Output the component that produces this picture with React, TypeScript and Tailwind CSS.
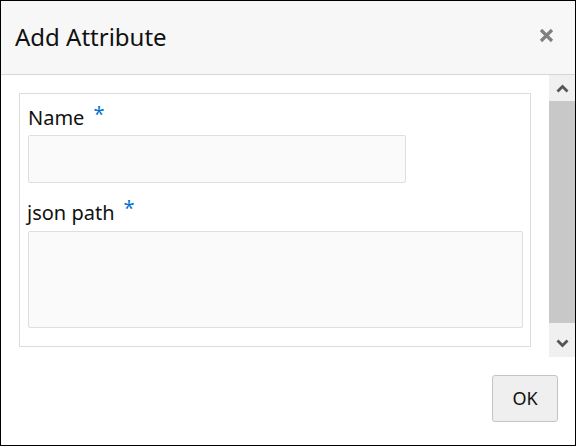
import React from "react";

export default function App() {
  return (
    <div
      className="w-[576px] h-[446px] border border-black bg-white flex flex-col overflow-hidden"
      style={{ fontFamily: '"Noto Sans", "Open Sans", sans-serif' }}
    >
      <div className="h-[74px] shrink-0 bg-[#f7f7f7] border-b border-[#d6d6d6] flex items-center justify-between pl-[14px] pr-[21px]">
        <h1 className="text-[24px] text-[#111] leading-none -mt-[2px]">Add Attribute</h1>
        <svg width="15" height="15" viewBox="0 0 15 15" aria-label="close" className="-mt-[5px]">
          <path d="M2 2 L13 13 M13 2 L2 13" stroke="#808080" strokeWidth="3.2" strokeLinecap="butt" />
        </svg>
      </div>

      <div className="h-[282px] shrink-0 flex">
        <div className="flex-1 pl-[18px] pr-[18px] pt-[18px]">
          <div className="h-[254px] border border-[#dcdcdc] pl-[8px] pr-[6px] pt-[8px]">
            <div className="flex items-start h-[33px]">
              <span className="text-[20px] text-[#111] leading-[31px]">Name</span>
              <span className="text-[20px] text-[#0572ce] leading-none ml-[9px] mt-[2px]">*</span>
            </div>
            <div className="w-[378px] h-[48px] bg-[#fafafa] border border-[#dfdfdf] rounded-[2px]" />
            <div className="flex items-start h-[48px] pt-[18px]">
              <span className="text-[20px] text-[#111] leading-[24px] -ml-[1px]">json path</span>
              <span className="text-[20px] text-[#0572ce] leading-none ml-[9px] -mt-[3px]">*</span>
            </div>
            <div className="w-[495px] h-[97px] bg-[#fafafa] border border-[#dfdfdf] rounded-[2px]" />
          </div>
        </div>
        <div className="w-[26px] shrink-0 bg-[#f0f0f0] flex flex-col">
          <div className="h-[26px] flex items-center justify-center">
            <svg width="13" height="9" viewBox="0 0 13 9">
              <path d="M1.5 7.5 L6.5 2.5 L11.5 7.5" stroke="#555" strokeWidth="2.8" fill="none" />
            </svg>
          </div>
          <div className="h-[222px] bg-[#c8c8c8]" />
          <div className="flex-1 flex justify-center pt-[16px]">
            <svg width="13" height="9" viewBox="0 0 13 9">
              <path d="M1.5 1.5 L6.5 6.5 L11.5 1.5" stroke="#555" strokeWidth="2.8" fill="none" />
            </svg>
          </div>
        </div>
      </div>

      <div className="flex-1 flex justify-end items-start pt-[18px] pr-[17px]">
        <button className="w-[66px] h-[47px] bg-[#efefef] border border-[#c4c4c4] rounded-[3px] text-[18px] text-[#111]">
          OK
        </button>
      </div>
    </div>
  );
}
